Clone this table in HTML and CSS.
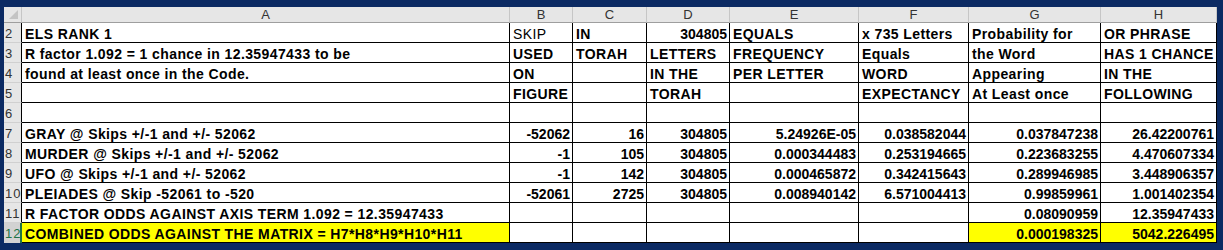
FILE: index.html
```html
<!DOCTYPE html>
<html>
<head>
<meta charset="utf-8">
<link rel="stylesheet" href="styles.css">
</head>
<body>
<div class="frame">
  <div class="sheet">
    <div class="corner"><span class="tri"></span></div>
    <div class="ch">A</div><div class="ch">B</div><div class="ch">C</div><div class="ch">D</div>
    <div class="ch">E</div><div class="ch">F</div><div class="ch">G</div><div class="ch">H</div>

    <div class="rh">2</div>
    <div class="c">ELS RANK 1</div><div class="c reg">SKIP</div><div class="c">IN</div><div class="c n">304805</div>
    <div class="c">EQUALS</div><div class="c">x 735 Letters</div><div class="c">Probability for</div><div class="c">OR PHRASE</div>

    <div class="rh">3</div>
    <div class="c">R factor 1.092 = 1 chance in 12.35947433 to be</div><div class="c">USED</div><div class="c">TORAH</div><div class="c">LETTERS</div>
    <div class="c">FREQUENCY</div><div class="c">Equals</div><div class="c">the Word</div><div class="c">HAS 1 CHANCE</div>

    <div class="rh">4</div>
    <div class="c">found at least once in the Code.</div><div class="c">ON</div><div class="c"></div><div class="c">IN THE</div>
    <div class="c">PER LETTER</div><div class="c">WORD</div><div class="c">Appearing</div><div class="c">IN THE</div>

    <div class="rh">5</div>
    <div class="c"></div><div class="c">FIGURE</div><div class="c"></div><div class="c">TORAH</div>
    <div class="c"></div><div class="c">EXPECTANCY</div><div class="c">At Least once</div><div class="c">FOLLOWING</div>

    <div class="rh">6</div>
    <div class="c"></div><div class="c"></div><div class="c"></div><div class="c"></div>
    <div class="c"></div><div class="c"></div><div class="c"></div><div class="c"></div>

    <div class="rh">7</div>
    <div class="c">GRAY @ Skips +/-1 and +/- 52062</div><div class="c n">-52062</div><div class="c n">16</div><div class="c n">304805</div>
    <div class="c n">5.24926E-05</div><div class="c n">0.038582044</div><div class="c n">0.037847238</div><div class="c n">26.42200761</div>

    <div class="rh">8</div>
    <div class="c">MURDER @ Skips +/-1 and +/- 52062</div><div class="c n">-1</div><div class="c n">105</div><div class="c n">304805</div>
    <div class="c n">0.000344483</div><div class="c n">0.253194665</div><div class="c n">0.223683255</div><div class="c n">4.470607334</div>

    <div class="rh">9</div>
    <div class="c">UFO @ Skips +/-1 and +/- 52062</div><div class="c n">-1</div><div class="c n">142</div><div class="c n">304805</div>
    <div class="c n">0.000465872</div><div class="c n">0.342415643</div><div class="c n">0.289946985</div><div class="c n">3.448906357</div>

    <div class="rh">10</div>
    <div class="c">PLEIADES @ Skip -52061 to -520</div><div class="c n">-52061</div><div class="c n">2725</div><div class="c n">304805</div>
    <div class="c n">0.008940142</div><div class="c n">6.571004413</div><div class="c n">0.99859961</div><div class="c n">1.001402354</div>

    <div class="rh">11</div>
    <div class="c">R FACTOR ODDS AGAINST AXIS TERM 1.092 = 12.35947433</div><div class="c"></div><div class="c"></div><div class="c"></div>
    <div class="c"></div><div class="c"></div><div class="c n">0.08090959</div><div class="c n">12.35947433</div>

    <div class="rh sel">12</div>
    <div class="c hl">COMBINED ODDS AGAINST THE MATRIX = H7*H8*H9*H10*H11</div><div class="c"></div><div class="c"></div><div class="c"></div>
    <div class="c"></div><div class="c"></div><div class="c n hl">0.000198325</div><div class="c n hl">5042.226495</div>
  </div>
</div>
</body>
</html>
```

FILE: styles.css
```css
html, body {
  margin: 0;
  padding: 0;
  background: #0b2a63;
}

.frame {
  padding: 7px 6px 7px 4px;
  width: 1213px;
}

.sheet {
  display: grid;
  grid-template-columns: 18px 488px 63px 74px 83px 129px 110px 132px 116px;
  grid-template-rows: 16px repeat(11, 20px);
  background: #ffffff;
  font-family: "Liberation Sans", Arial, sans-serif;
}

.sheet > div {
  box-sizing: border-box;
  white-space: nowrap;
  min-width: 0;
}

.corner {
  background: #e6e6e6;
  border-right: 1px solid #c6c6c6;
  border-bottom: 1px solid #9e9e9e;
  position: relative;
}

.tri {
  position: absolute;
  right: 3px;
  bottom: 3px;
  width: 0;
  height: 0;
  border-left: 9px solid transparent;
  border-bottom: 9px solid #c4c4c4;
}

.ch {
  background: #e6e6e6;
  border-right: 1px solid #c6c6c6;
  border-bottom: 1px solid #9e9e9e;
  color: #333333;
  font-size: 13px;
  line-height: 15px;
  text-align: center;
}

.rh {
  background: #e6e6e6;
  border-right: 1px solid #000000;
  border-bottom: 1px solid #d0d0d0;
  color: #333333;
  font-size: 13px;
  line-height: 21px;
  padding-left: 1px;
  letter-spacing: 1px;
}

.rh.sel {
  background: #d2d2d2;
  color: #217346;
  border-right: 2px solid #217346;
  border-bottom: none;
}

.c {
  border-right: 1px solid #000000;
  border-bottom: 1px solid #000000;
  font-size: 14px;
  font-weight: bold;
  color: #000000;
  line-height: 22px;
  padding: 0 3px;
  letter-spacing: 0.4px;
  overflow: visible;
}

.c.reg {
  font-weight: normal;
}

.c.n {
  text-align: right;
  padding-right: 2px;
  letter-spacing: 0;
}

.c.hl {
  background: #ffff00;
}
```
